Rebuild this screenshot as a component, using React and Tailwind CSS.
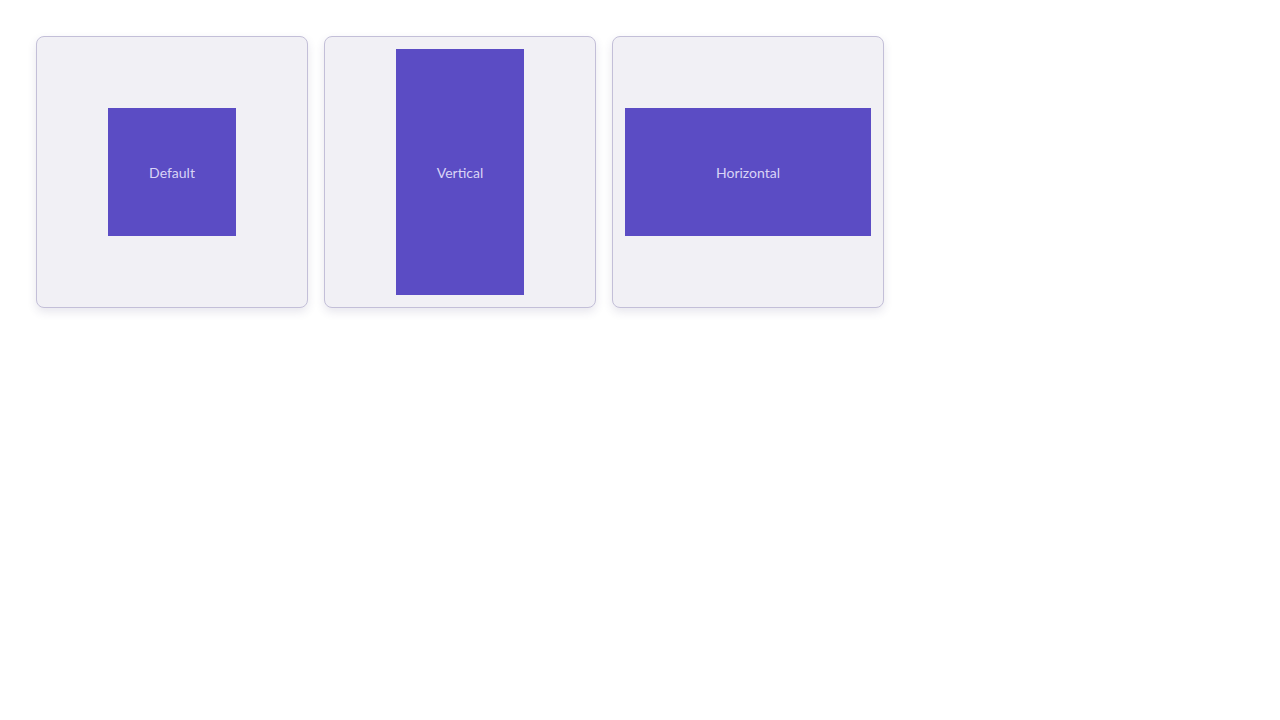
import React from 'react'

const CARDS = [
  { key: 'default', label: 'Default', box: 'w-32 h-32' },
  { key: 'vertical', label: 'Vertical', box: 'w-32 self-stretch' },
  { key: 'horizontal', label: 'Horizontal', box: 'h-32 self-stretch' },
]

function Card({ label, box, kind }) {
  return (
    <div
      className={`w-[272px] h-[272px] p-3 rounded-lg border border-[#c3bfd8] bg-[#f1f0f5] shadow-[0_4px_10px_rgba(60,50,110,0.12)] flex ${
        kind === 'horizontal' ? 'flex-col justify-center' : 'items-center justify-center'
      }`}
    >
      <div className={`${box} bg-[#5b4cc4] flex items-center justify-center`}>
        <span className="text-[14px] text-[#d9d4f6]">{label}</span>
      </div>
    </div>
  )
}

export default function App() {
  return (
    <div className="min-h-screen bg-white p-9 font-['Lato',sans-serif]">
      <div className="flex gap-4">
        {CARDS.map((c) => (
          <Card key={c.key} label={c.label} box={c.box} kind={c.key} />
        ))}
      </div>
    </div>
  )
}
